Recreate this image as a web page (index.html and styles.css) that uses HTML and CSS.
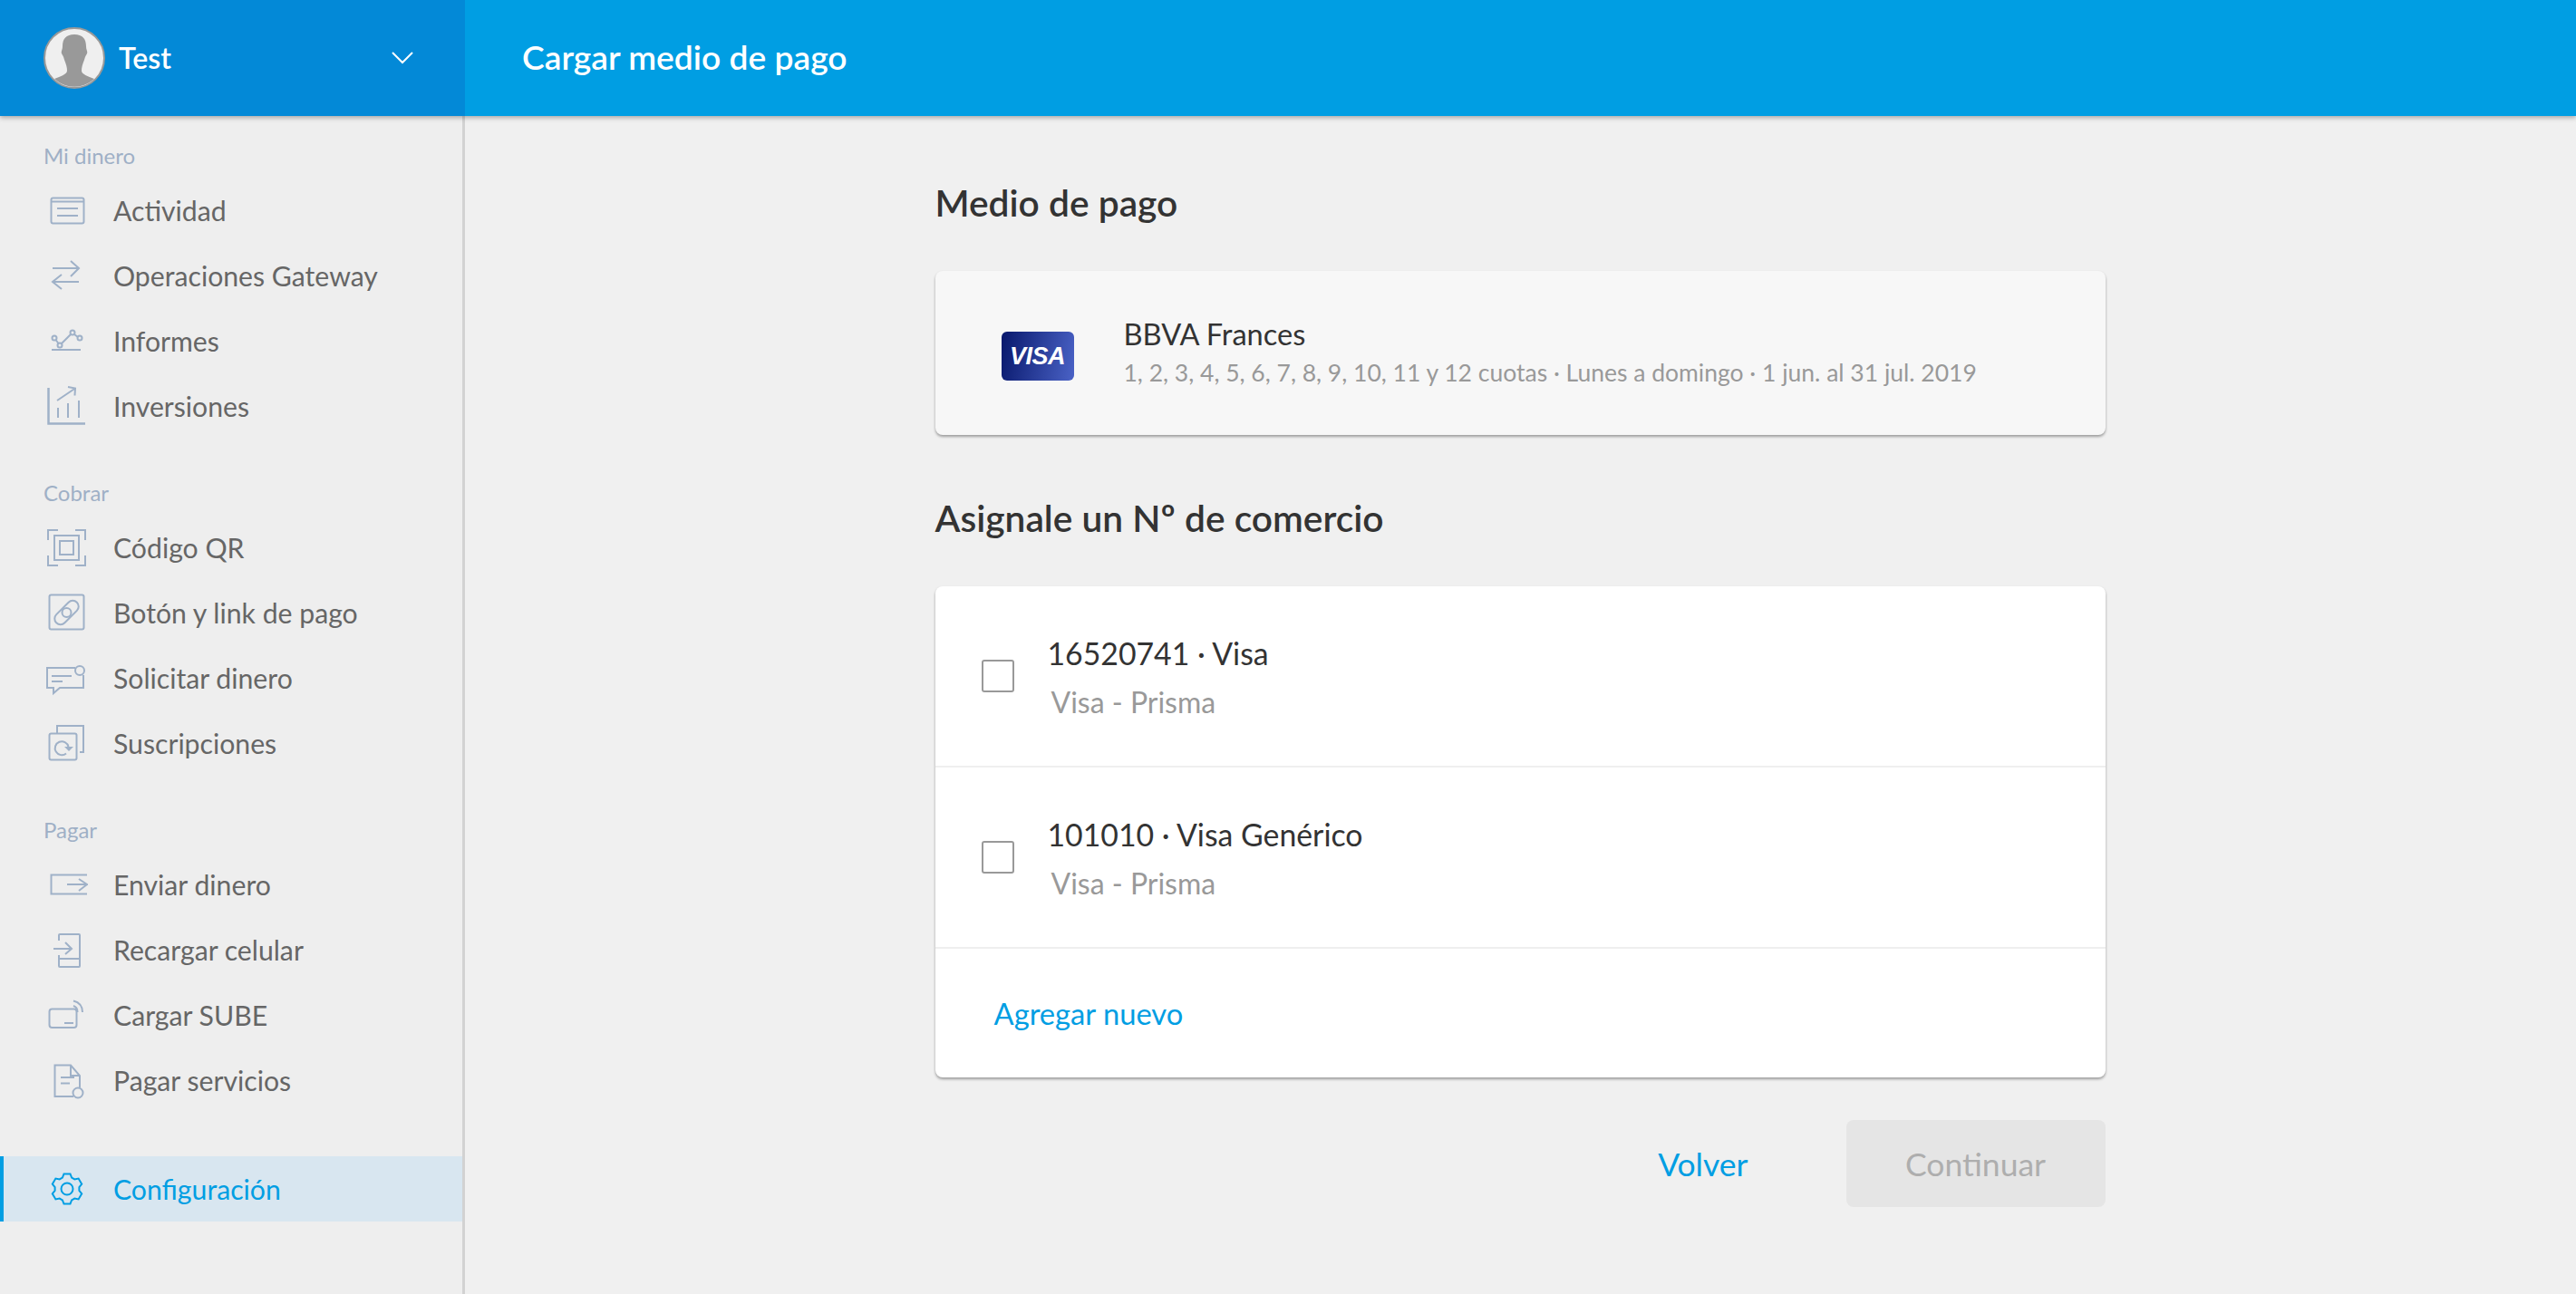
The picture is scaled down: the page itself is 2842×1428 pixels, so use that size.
FILE: index.html
```html
<!DOCTYPE html>
<html lang="es">
<head>
<meta charset="UTF-8">
<title>Cargar medio de pago</title>
<link rel="stylesheet" href="styles.css">
</head>
<body>

<header class="topbar">
    <div class="account">
        <svg class="avatar" width="68" height="68" viewBox="0 0 68 68">
            <circle cx="34" cy="34" r="33" fill="#efefef" stroke="#999" stroke-width="2"/>
            <path fill="#999" d="M34 8C25 8 21 13 21 21c0 4-2 6-1 8 1 2 2 3 3 7 2 5 3 8 3 12 0 4-7 6-14 9a32 32 0 0 0 44 0c-7-3-14-5-14-9 0-4 1-7 3-12 1-4 2-5 3-7 1-2-1-4-1-8 0-8-4-13-13-13z"/>
        </svg>
        <span class="account-name">Test</span>
        <svg class="chevron" width="24" height="14" viewBox="0 0 24 14">
            <path d="M1 1l11 11L23 1" fill="none" stroke="#fff" stroke-width="2"/>
        </svg>
    </div>
    <h1 class="page-title">Cargar medio de pago</h1>
</header>

<div class="layout">
    <nav class="sidebar">
        <div class="nav-label">Mi dinero</div>
        <a class="nav-item">
            <svg class="nav-icon" viewBox="0 0 48 48"><rect x="7.500" y="10.500" width="36" height="28" rx="2"/><path d="M8 14.500h35M14 22h23M14 30h23"/></svg>
            Actividad
        </a>
        <a class="nav-item">
            <svg class="nav-icon" viewBox="0 0 48 48"><path d="M9 16h29M29 8l9 8-9 9M38 31H9M19 23l-10 8 10 8"/></svg>
            Operaciones Gateway
        </a>
        <a class="nav-item">
            <svg class="nav-icon" viewBox="0 0 48 48"><circle cx="11" cy="21" r="2.500"/><circle cx="17" cy="29" r="2.500"/><circle cx="31" cy="15" r="2.500"/><circle cx="39" cy="21" r="2.500"/><path d="M12.500 23l3 4M19 27l10-10M33 17l4 3M8 34h32"/></svg>
            Informes
        </a>
        <a class="nav-item">
            <svg class="nav-icon" viewBox="0 0 48 48"><path class="thick" d="M4.500 4v39.500H45"/><path d="M14 18L34 4.500M26 3l8 1.500-.5 8M15 37V26M26 37V21M38 37V18"/></svg>
            Inversiones
        </a>

        <div class="nav-label nav-label-gap">Cobrar</div>
        <a class="nav-item">
            <svg class="nav-icon" viewBox="0 0 48 48"><path d="M15 5H4v11M34 5h11v11M15 44H4V33M34 44h11V33"/><rect x="11" y="11" width="27" height="27"/><rect x="17" y="17" width="15" height="15"/></svg>
            Código QR
        </a>
        <a class="nav-item">
            <svg class="nav-icon" viewBox="0 0 48 48"><rect x="5.500" y="4.500" width="38" height="38" rx="2"/><rect x="8.500" y="17.500" width="32" height="13" rx="6.500" transform="rotate(-45 24.500 24)"/><circle cx="24.500" cy="24" r="5"/></svg>
            Botón y link de pago
        </a>
        <a class="nav-item">
            <svg class="nav-icon" viewBox="0 0 48 48"><path d="M34 13H3v22h7v6l7-6h26V21M8 22h22M8 28h12"/><circle cx="39" cy="16" r="5"/></svg>
            Solicitar dinero
        </a>
        <a class="nav-item">
            <svg class="nav-icon" viewBox="0 0 48 48"><path d="M14 13V5h29v29h-4"/><rect x="5.500" y="13.500" width="30" height="29" rx="2"/><path d="M24 35.500A7.500 7.500 0 1 1 26.500 28"/><path d="M22 28h10l-5 5z" class="fill"/></svg>
            Suscripciones
        </a>

        <div class="nav-label nav-label-gap">Pagar</div>
        <a class="nav-item">
            <svg class="nav-icon" viewBox="0 0 48 48"><path d="M47 13.500H7.500v21H47M25 24h22l-9-6M47 24l-9 7"/></svg>
            Enviar dinero
        </a>
        <a class="nav-item">
            <svg class="nav-icon" viewBox="0 0 48 48"><path d="M16 14V8a1 1 0 0 1 1-1h21a1 1 0 0 1 1 1v34a1 1 0 0 1-1 1H17a1 1 0 0 1-1-1V30M16 34h23M10 23h20M23 16l7 7-7 6"/></svg>
            Recargar celular
        </a>
        <a class="nav-item">
            <svg class="nav-icon" viewBox="0 0 48 48"><rect x="5.500" y="17.500" width="30" height="20.500" rx="3"/><path d="M22 33h10M32 14c3 1 4.500 3.500 4.500 7M32 8.500c6 1.500 10 6 10 12.500"/></svg>
            Cargar SUBE
        </a>
        <a class="nav-item">
            <svg class="nav-icon" viewBox="0 0 48 48"><path d="M32 42H11.500V7.500H29L39 19v13M29 7.500V19h10M18 21h15M18 27.500h10"/><circle cx="37" cy="38" r="5.500"/></svg>
            Pagar servicios
        </a>

        <a class="nav-item nav-item-active">
            <svg class="nav-icon" viewBox="0 0 48 48"><g transform="translate(1 0)"><path d="M20.500 7.400h7l1.600 4.100 3.200 1.900 4.300-.8 3.600 6.100-2.800 3.400v3.800l2.800 3.400-3.600 6.100-4.300-.8-3.200 1.900-1.600 4.100h-7l-1.600-4.100-3.200-1.900-4.300.8-3.600-6.100 2.800-3.400v-3.800l-2.800-3.400 3.600-6.100 4.300.8 3.200-1.900z"/><circle cx="24" cy="24" r="6.500"/></g></svg>
            Configuración
        </a>
    </nav>

    <main class="content">
        <h2 class="section-title">Medio de pago</h2>
        <div class="card card-summary">
            <div class="visa-logo">VISA</div>
            <div class="summary-text">
                <div class="summary-name">BBVA Frances</div>
                <div class="summary-detail">1, 2, 3, 4, 5, 6, 7, 8, 9, 10, 11 y 12 cuotas · Lunes a domingo · 1 jun. al 31 jul. 2019</div>
            </div>
        </div>

        <h2 class="section-title section-title-gap">Asignale un Nº de comercio</h2>
        <div class="card">
            <div class="merchant-row">
                <span class="checkbox"></span>
                <div class="merchant-text">
                    <div class="merchant-name">16520741 · Visa</div>
                    <div class="merchant-sub">Visa - Prisma</div>
                </div>
            </div>
            <div class="merchant-row">
                <span class="checkbox"></span>
                <div class="merchant-text">
                    <div class="merchant-name">101010 · Visa Genérico</div>
                    <div class="merchant-sub">Visa - Prisma</div>
                </div>
            </div>
            <div class="add-row"><a class="add-link">Agregar nuevo</a></div>
        </div>

        <div class="actions">
            <a class="back-link">Volver</a>
            <button class="btn-continue" disabled>Continuar</button>
        </div>
    </main>
</div>

</body>
</html>
```

FILE: styles.css
```css
* {
    box-sizing: border-box;
}
body {
    margin: 0;
    height: 100vh;
    overflow: hidden;
    display: flex;
    flex-direction: column;
    background-color: #eee;
    font-family: Lato, "Liberation Sans", sans-serif;
    color: #333;
}
.topbar {
    flex: none;
    height: 128px;
    display: flex;
    align-items: center;
    background-color: #009ee3;
    box-shadow: 0 2px 5px rgba(0,0,0,0.3);
    position: relative;
    z-index: 1;
}
.account {
    width: 513px;
    height: 100%;
    display: flex;
    align-items: center;
    padding: 0 57px 0 48px;
    background-color: #0389d7;
}
.account-name {
    margin-left: 15px;
    padding-bottom: 2px;
    flex: 1;
    color: #fff;
    font-size: 32px;
    font-weight: 600;
}
.page-title {
    margin: 0 0 0 63px;
    padding-bottom: 3px;
    color: #fff;
    font-size: 37.200px;
    font-weight: 600;
}
.layout {
    flex: 1;
    display: flex;
    min-height: 0;
}
.sidebar {
    width: 513px;
    flex: none;
    padding-top: 28px;
    border-right: 3px solid #d2d2d2;
}
.nav-label {
    height: 32px;
    line-height: 32px;
    margin-bottom: 8px;
    padding-left: 48px;
    font-size: 24px;
    color: #9fb0c6;
}
.nav-label-gap {
    margin-top: 44px;
}
.nav-item {
    height: 72px;
    display: flex;
    align-items: center;
    padding-left: 49px;
    font-size: 30.200px;
    color: #666;
}
.nav-icon {
    width: 48px;
    height: 48px;
    margin-right: 28px;
    flex: none;
    fill: none;
    stroke: #9fb1c8;
    stroke-width: 2;
}
.nav-icon .fill {
    fill: #9fb1c8;
    stroke: none;
}
.nav-icon .thick {
    stroke-width: 2.500;
}
.nav-item-active {
    margin-top: 48px;
    padding-left: 45px;
    border-left: 4px solid #009ee3;
    background-color: #d8e6f0;
    color: #009ee3;
}
.nav-item-active .nav-icon {
    stroke: #009ee3;
}
.content {
    flex: 1;
    min-width: 0;
    padding: 72px 1px 0 0;
    background-color: #f0f0f0;
}
.content > * {
    width: 1291px;
    margin-left: auto;
    margin-right: auto;
}
.section-title {
    height: 50px;
    line-height: 48px;
    margin-top: 0;
    margin-bottom: 49px;
    font-size: 40.700px;
    font-weight: 600;
    color: #333;
}
.section-title-gap {
    margin-top: 68px;
}
.card {
    background-color: #fff;
    border-radius: 8px;
    box-shadow: 0 2px 3px rgba(0,0,0,0.35);
}
.card-summary {
    height: 181px;
    display: flex;
    align-items: center;
    padding-left: 73px;
    background-color: #f7f7f7;
}
.visa-logo {
    width: 80px;
    height: 54px;
    margin-top: 7px;
    margin-right: 55px;
    border-radius: 6px;
    background: linear-gradient(100deg, #08186c, #4a62c6);
    color: #fff;
    text-align: center;
    line-height: 54px;
    font-family: "Liberation Sans", sans-serif;
    font-size: 27px;
    font-weight: 700;
    font-style: italic;
    letter-spacing: -0.5px;
}
.summary-text {
    padding-bottom: 2px;
}
.summary-name {
    font-size: 32.600px;
    line-height: 42px;
    color: #333;
}
.summary-detail {
    margin-top: 2px;
    font-size: 26.500px;
    line-height: 38px;
    color: #999;
}
.merchant-row {
    height: 200px;
    display: flex;
    align-items: center;
    padding-left: 51px;
    border-bottom: 2px solid #efefef;
}
.checkbox {
    width: 36px;
    height: 36px;
    margin-right: 37px;
    border: 2px solid #999;
    border-radius: 3px;
    background-color: #fff;
}
.merchant-text {
    padding-top: 3px;
}
.merchant-name {
    font-size: 33.800px;
    line-height: 46px;
    color: #333;
}
.merchant-sub {
    margin-top: 8px;
    padding-left: 4px;
    font-size: 32px;
    line-height: 46px;
    color: #999;
}
.add-row {
    height: 142px;
    display: flex;
    align-items: center;
    padding-left: 65px;
}
.add-link {
    font-size: 32.700px;
    color: #009ee3;
}
.actions {
    margin-top: 47px;
    display: flex;
    justify-content: flex-end;
    align-items: center;
}
.back-link {
    margin-right: 108px;
    font-size: 35.500px;
    color: #009ee3;
}
.btn-continue {
    width: 286px;
    height: 96px;
    border: none;
    border-radius: 8px;
    background-color: #e5e5e5;
    color: #aeaeae;
    font-family: inherit;
    font-size: 35.500px;
}
```
